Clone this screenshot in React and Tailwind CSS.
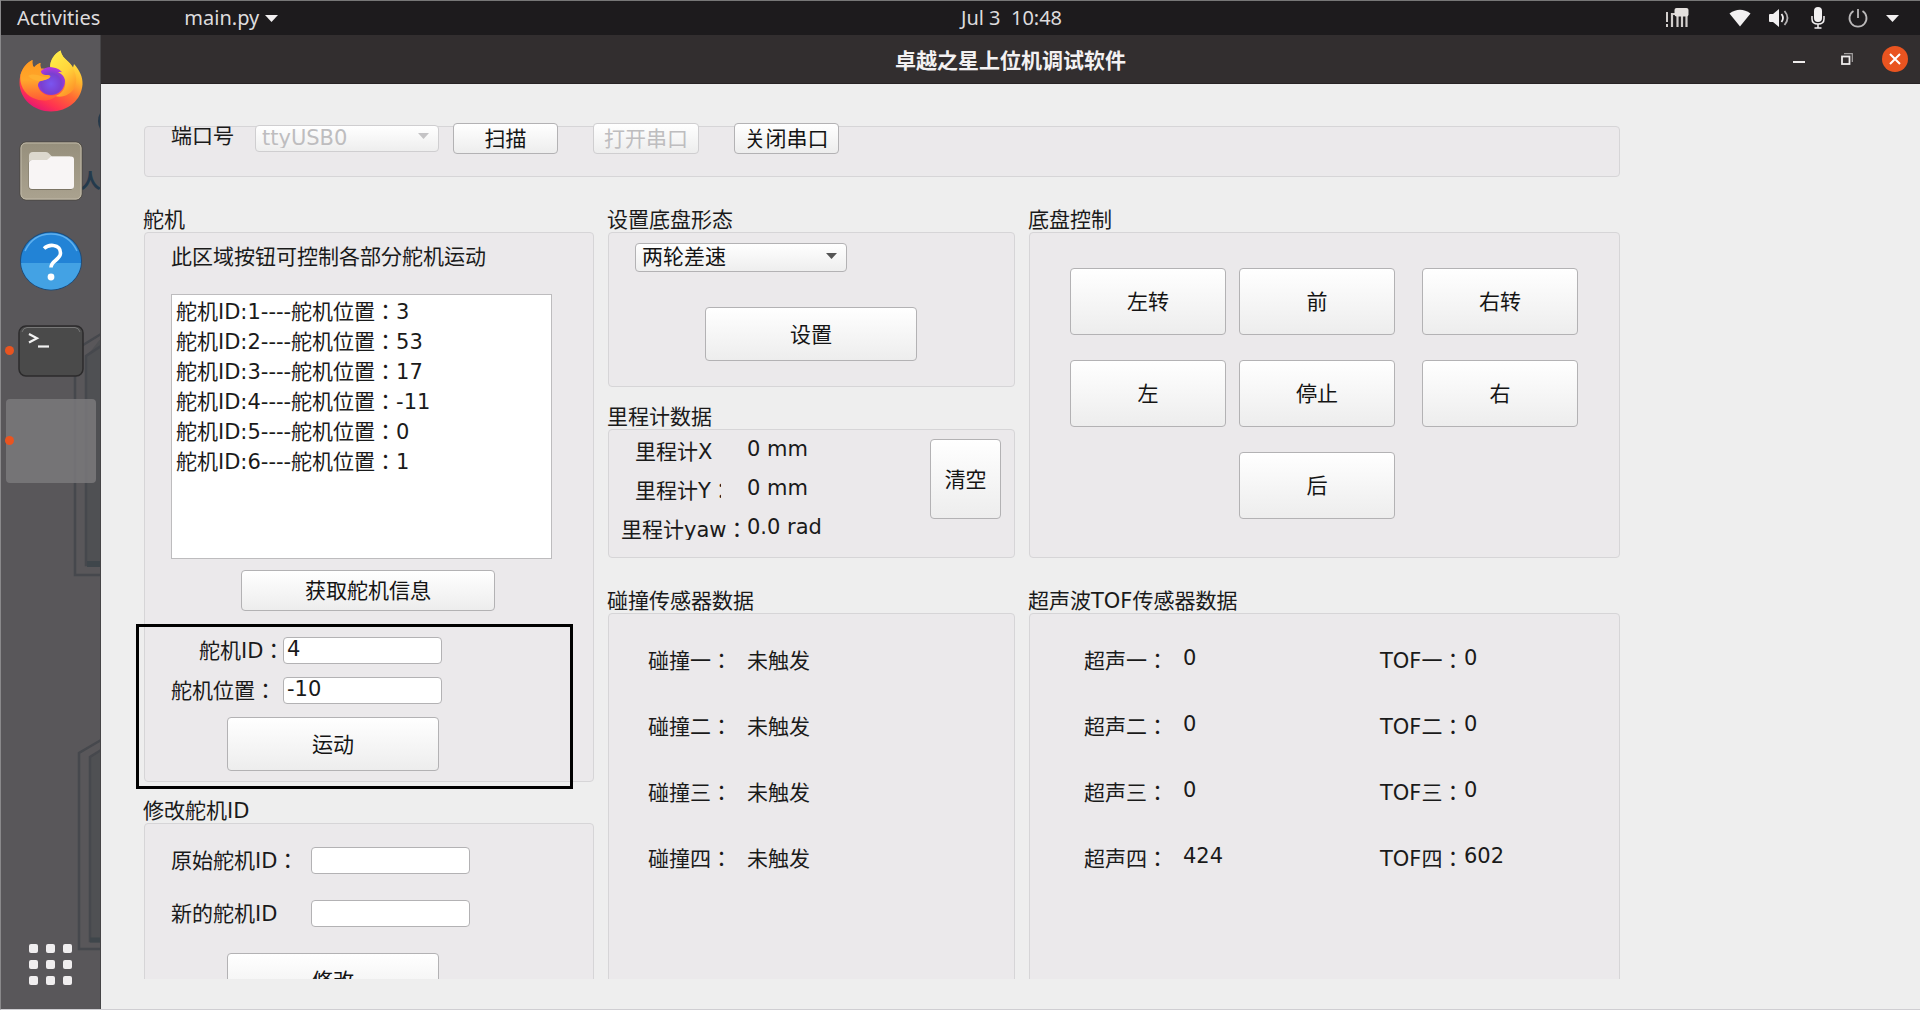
import React from "react";

const body = "font-['DejaVu_Sans','Noto_Sans_CJK_JP',sans-serif]";
const bar = "font-['Noto_Sans','Noto_Sans_CJK_JP',sans-serif]";

function Btn({ children, className = "", disabled = false }) {
  return (
    <button
      type="button"
      disabled={disabled}
      className={`shrink-0 rounded border border-[#b3b2b4] bg-linear-to-b from-white to-[#ededed] pt-px text-center leading-6 text-[#141414] disabled:border-[#cfced0] disabled:text-[#bebdbf] ${className}`}
    >
      {children}
    </button>
  );
}

function Select({ id, label, options, className = "", selectClass = "", disabled = false }) {
  return (
    <div className={`relative shrink-0 ${className}`}>
      <select
        id={id}
        aria-label={label}
        disabled={disabled}
        className={`h-full w-full appearance-none rounded border border-[#b3b2b4] bg-linear-to-b from-white to-[#eeeeee] pl-1.5 leading-6 text-[#141414] disabled:border-[#cfced0] disabled:text-[#bebdbf] disabled:opacity-100 ${selectClass}`}
      >
        {options.map((o) => (
          <option key={o}>{o}</option>
        ))}
      </select>
      <svg
        className={`pointer-events-none absolute right-2.5 top-1/2 -mt-1 ${disabled ? "text-[#c4c3c5]" : "text-[#555]"}`}
        width="11"
        height="6"
        viewBox="0 0 11 6"
      >
        <path d="M0 0h11L5.500 6z" fill="currentColor" />
      </svg>
    </div>
  );
}

function Group({ title, className = "", boxClass = "", children }) {
  return (
    <section className={`flex flex-col ${className}`}>
      <h2 className="-ml-px leading-6 whitespace-nowrap">{title}</h2>
      <div className={`rounded border border-[#d6d5d7] bg-[#ebe9eb] ${boxClass}`}>{children}</div>
    </section>
  );
}

function TextField({ id, value }) {
  return (
    <input
      id={id}
      type="text"
      defaultValue={value}
      className="h-[27px] w-[159px] shrink-0 rounded border border-[#b3b2b4] bg-white pb-1 pl-[3px] leading-6 outline-none"
    />
  );
}

function Firefox() {
  return (
    <svg width="64" height="62" viewBox="0 0 64 62">
      <defs>
        <linearGradient id="ffBody" x1="0.8" y1="0.05" x2="0.25" y2="1">
          <stop offset="0" stopColor="#fff14a" />
          <stop offset="0.3" stopColor="#ffb52e" />
          <stop offset="0.55" stopColor="#ff6a33" />
          <stop offset="0.8" stopColor="#ff3350" />
          <stop offset="1" stopColor="#e0107a" />
        </linearGradient>
        <radialGradient id="ffGlobe" cx="0.5" cy="0.6" r="0.6">
          <stop offset="0" stopColor="#7a55f0" />
          <stop offset="0.6" stopColor="#7a3fd0" />
          <stop offset="1" stopColor="#b637dd" />
        </radialGradient>
        <linearGradient id="ffFlame" x1="0" y1="0" x2="0.5" y2="1">
          <stop offset="0" stopColor="#fff24d" />
          <stop offset="0.6" stopColor="#ffd43a" />
          <stop offset="1" stopColor="#ff9a2a" />
        </linearGradient>
        <linearGradient id="ffHead" x1="0" y1="0" x2="0" y2="1">
          <stop offset="0" stopColor="#ff9a1f" />
          <stop offset="0.5" stopColor="#ffa62b" />
          <stop offset="1" stopColor="#ff5a36" />
        </linearGradient>
      </defs>
      <path
        d="M13.500 10C13 13 13.500 15.500 15 17.500c2-2.500 4.500-4 6.500-4.500-.5 2-.3 4 .7 5.500 3 .2 6 .3 8.800-.5C31 10 36 3.500 41.500 0.500c.8 4.500 3.500 8 8 11.500 2 1.700 3.500 3.500 4.500 5.500l1-3.500c5.500 6 9 13 8.500 20.500C62.500 50 49 61.500 32 61.500S0.500 49 0.500 32.500C0.500 23 5 14 13.500 10z"
        fill="url(#ffBody)"
      />
      <circle cx="32" cy="31" r="14" fill="url(#ffGlobe)" />
      <path
        d="M41.500 0.500C35 4 31 10 31.200 17c5 .3 10 2 12.300 5.500-1.700-.5-3-.6-4.300-.3 5.500 2.500 8.300 7.500 7 13.300-1 5-5 9-10 10.500 7 2.500 16-1.500 19.500-9 3.500-8 1-16-6.200-25C45.500 8.500 42.300 5 41.500 0.500z"
        fill="url(#ffFlame)"
      />
      <path
        d="M13.500 10c-5.800 3-10 8-12 14.500C0 34 5 44 14 48c10 4.500 20 2.500 24-3-8 2.500-17-1-19-8.500-.4-2 .5-4.200 2-5.500 4-1 8-1.800 10.200-4 .8-1-.5-2-2-2-3 .2-6-.3-7-2.500-.4-1.500-.6-2.600 0-4-.9-1.800-1.200-3.600-.7-5.500-2.500.7-4.700 2.200-6.500 4.500-1.500-2-2-4.500-1.500-7.500z"
        fill="url(#ffHead)"
      />
      <path d="M9 26c4-2.500 9-1.500 13 .2 3 1 6 .8 9 1-2 2.300-6 3-10 4-5-.7-9-2-12-5.200z" fill="#ffb030" />
    </svg>
  );
}

function Files() {
  return (
    <svg width="64" height="60" viewBox="0 0 64 60">
      <defs>
        <linearGradient id="flBg" x1="0" y1="0" x2="0" y2="1">
          <stop offset="0" stopColor="#968f7c" />
          <stop offset="1" stopColor="#aaa28f" />
        </linearGradient>
      </defs>
      <rect x="1" y="1" width="62" height="58" rx="6" fill="url(#flBg)" stroke="#4a4740" />
      <rect x="2" y="2" width="60" height="56" rx="5" fill="none" stroke="#c0b9a8" />
      <path d="M10 15q0-4 4-4h13q2 0 3 1.500l3 3h18v12H10z" fill="#dcd8ce" />
      <rect x="9.500" y="19" width="45" height="30" rx="4" fill="#7b7464" />
      <path d="M10 22q0-3 3-3h15l4-3.500h20q3 0 3 3V45q0 3-3 3H13q-3 0-3-3z" fill="#f8f5f5" />
    </svg>
  );
}

function Help() {
  return (
    <svg width="64" height="60" viewBox="0 0 64 60">
      <clipPath id="hpLow">
        <rect x="0" y="32" width="64" height="30" />
      </clipPath>
      <ellipse cx="32" cy="30" rx="31" ry="29.500" fill="#1f4c78" />
      <ellipse cx="32" cy="30" rx="30" ry="28.500" fill="#2283d6" />
      <ellipse cx="32" cy="30" rx="30" ry="28.500" fill="#43a2e4" clipPath="url(#hpLow)" />
      <path d="M6 20C12 7 22 3 32 3s20 4 26 17" fill="none" stroke="#5fb0ee" strokeWidth="1.500" />
      <path
        d="M25 17.500c3-2.800 6.500-3.500 9.500-3 4.500.6 7 3.500 7 7.500 0 7-9.500 7.500-9.500 14.500"
        fill="none"
        stroke="#fff"
        strokeWidth="3.600"
      />
      <circle cx="32" cy="46" r="3.400" fill="#fff" />
    </svg>
  );
}

function Terminal() {
  return (
    <svg width="66" height="52" viewBox="0 0 66 52">
      <rect x="1" y="1" width="64" height="50" rx="7" fill="#4a4a4a" stroke="#2c2b2c" strokeWidth="1.500" />
      <path d="M4 7q1-4 5-4.500h48q4 .5 5 4.500" fill="none" stroke="#777" />
      <path d="M11 9l8 4.300-8 4.200" fill="none" stroke="#f2f2f2" strokeWidth="2.200" />
      <path d="M20 21.500h11" stroke="#f2f2f2" strokeWidth="2.200" />
    </svg>
  );
}

function DockItem({ label, running = false, active = false, children }) {
  return (
    <div className="relative flex h-[90px] items-center justify-center">
      <button
        type="button"
        aria-label={label}
        className={active ? "h-[84px] w-[90px] rounded bg-[#7a797b]/85" : "flex items-center justify-center"}
      >
        {children}
      </button>
      {running && <span className="absolute left-1 top-1/2 -mt-[5px] size-[9px] rounded-full bg-[#e95420]" />}
    </div>
  );
}

function Dock() {
  return (
    <nav className="relative flex w-[100px] shrink-0 flex-col overflow-hidden border-r border-[#454446] bg-[#59575a]">
      <svg className="absolute left-0 top-0" width="101" height="975" viewBox="1 35 101 975" fill="none">
        <ellipse cx="108" cy="121" rx="10" ry="13" fill="#26394a" />
        <path d="M101 338L87 356V565h14z" fill="#4f5053" />
        <path d="M101 334L75 350V575h26M101 346L86 356V565h15" stroke="#46484d" strokeWidth="2.500" />
        <path d="M87 564h14" stroke="#3f464b" strokeWidth="6" />
        <path d="M101 751L90 757V941h11z" fill="#4f5053" />
        <path d="M101 740L79 753V949h22M101 750L90 757V941h11" stroke="#46484d" strokeWidth="2.500" />
        <path d="M90 940h11" stroke="#3f464b" strokeWidth="5" />
      </svg>
      <span className="absolute left-[79px] top-[131px] text-[21px] leading-[26px] font-bold text-[#243a4c] font-['Noto_Sans_CJK_JP',sans-serif]">
        人
      </span>
      <div className="mt-px flex flex-col">
        <DockItem label="Firefox"><Firefox /></DockItem>
        <DockItem label="Files"><Files /></DockItem>
        <DockItem label="Help"><Help /></DockItem>
        <DockItem label="Terminal" running><Terminal /></DockItem>
        <DockItem label="main.py" running active />
      </div>
      <button
        type="button"
        aria-label="Show Applications"
        className="relative mx-auto mt-auto mb-6 grid grid-cols-3 gap-x-2 gap-y-[7px]"
      >
        {Array.from({ length: 9 }, (_, i) => (
          <span key={i} className="size-[9px] rounded-xs bg-[#f0eeef]" />
        ))}
      </button>
    </nav>
  );
}

function TopBar() {
  return (
    <header className={`grid h-[35px] shrink-0 grid-cols-[1fr_auto_1fr] items-center border-t border-[#777] bg-[#1d1b1d] text-[20px] leading-8 text-[#dedcdd] ${bar}`}>
      <div className="flex items-center gap-[84px] pl-4">
        <button type="button">Activities</button>
        <button type="button" className="flex items-center gap-1.5">
          main.py
          <svg width="13" height="7" viewBox="0 0 13 7"><path d="M0 0h13L6.500 7z" fill="#f2f0f1" /></svg>
        </button>
      </div>
      <time className="pl-[102px] whitespace-pre">Jul 3  10:48</time>
      <div className="flex items-center justify-end pr-[21px] text-[#f2f0f1]">
        <svg className="mr-10" width="24" height="22" viewBox="0 0 24 22" fill="none" stroke="#d2cecc">
          <path d="M2 5v10M2 17v3" strokeWidth="2" />
          <path d="M7 20V7h4M12.500 9v11M17 9v11M21.500 9v11" strokeWidth="2.200" />
          <rect x="9.500" y="1" width="14" height="8.500" rx="2" fill="#e4e0de" stroke="none" />
        </svg>
        <svg className="mr-[18px]" width="22" height="18" viewBox="0 0 22 18" fill="currentColor">
          <path d="M0.500 4.500Q11-3 21.500 4.500L11 17.500z" />
        </svg>
        <svg className="mr-[21px]" width="21" height="18" viewBox="0 0 21 18" fill="none" stroke="currentColor">
          <path d="M0 6q0-1 1-1h3l6-5v18l-6-5H1q-1 0-1-1z" fill="currentColor" stroke="none" />
          <path d="M12.500 5q3 4 0 8" strokeWidth="1.800" />
          <path d="M15.500 2q6 7 0 14" strokeWidth="1.800" opacity="0.7" />
        </svg>
        <svg className="mr-[23px]" width="14" height="22" viewBox="0 0 14 22" fill="none" stroke="currentColor">
          <rect x="3" y="0" width="8" height="15" rx="4" fill="currentColor" stroke="none" />
          <path d="M1 9v3q0 5 6 5t6-5V9M7 17v4M3.500 21h7" strokeWidth="1.500" />
        </svg>
        <svg className="mr-[18px]" width="20" height="20" viewBox="0 0 20 20" fill="none" stroke="#bbb9ba" strokeWidth="1.800">
          <path d="M5.500 3A8.500 8.500 0 1 0 14.500 3M10 1v9" />
        </svg>
        <svg width="13" height="7" viewBox="0 0 13 7"><path d="M0 0h13L6.500 7z" fill="currentColor" /></svg>
      </div>
    </header>
  );
}

function TitleBar() {
  return (
    <div className={`grid h-[49px] shrink-0 grid-cols-[1fr_auto_1fr] items-center border-b border-[#272324] bg-[#322e2f] ${bar}`}>
      <span />
      <h1 className="pt-0.5 text-[21px] leading-8 font-bold text-[#f3f1f2]">卓越之星上位机调试软件</h1>
      <div className="flex items-center justify-end pr-3 text-[#eeecec]">
        <button type="button" aria-label="Minimize" className="mr-9">
          <svg width="12" height="12" viewBox="0 0 12 12"><path d="M0 9h12" stroke="currentColor" strokeWidth="2" /></svg>
        </button>
        <button type="button" aria-label="Restore" className="mr-[29px]">
          <svg width="12" height="12" viewBox="0 0 12 12" fill="none" stroke="currentColor">
            <path d="M3 0.700h8.300V9" strokeWidth="1.200" opacity="0.6" />
            <rect x="1" y="3.500" width="7.500" height="7.500" strokeWidth="1.800" />
          </svg>
        </button>
        <button type="button" aria-label="Close" className="flex size-[26px] items-center justify-center rounded-full bg-[#e95420]">
          <svg width="12" height="12" viewBox="0 0 12 12"><path d="M1 1l10 10M11 1L1 11" stroke="#fff" strokeWidth="2" /></svg>
        </button>
      </div>
    </div>
  );
}

const servos = [3, 53, 17, -11, 0, 1];
const bumps = ["一", "二", "三", "四"];
const sonar = ["0", "0", "0", "424"];
const tof = ["0", "0", "0", "602"];

export default function App() {
  return (
    <div className="flex h-screen min-h-0 flex-col overflow-hidden border-b border-l border-b-[#cfced2] border-l-[#8a898b] bg-[#eeeeee]">
      <TopBar />
      <div className="flex min-h-0 flex-1">
        <Dock />
        <div className="flex min-w-0 flex-1 flex-col">
          <TitleBar />
          <main className={`mb-[30px] min-h-0 flex-1 overflow-hidden pt-[42px] pr-[300px] pl-[43px] text-[21px] text-[#1a1a1a] ${body}`}>
            <div className="h-[51px] rounded border border-[#d6d5d7] bg-[#ebe9eb] pl-[26px]">
              <div className="-mt-1 flex items-start">
                <label htmlFor="port" className="w-[84px] shrink-0 leading-[27px]">端口号</label>
                <Select id="port" label="端口号" disabled options={["ttyUSB0"]} className="mr-3.5 h-[27px] w-[184px]" selectClass="pb-[3px]" />
                <Btn className="mr-[35px] h-[31px] w-[105px]">扫描</Btn>
                <Btn disabled className="mr-[35px] h-[31px] w-[106px]">打开串口</Btn>
                <Btn className="h-[31px] w-[105px]">关闭串口</Btn>
              </div>
            </div>

            <div className="mt-[31px] grid grid-cols-[450fr_407fr_591fr] items-start gap-x-3.5">
              <div className="relative flex min-w-0 flex-col gap-[17px]">
                <Group title="舵机" boxClass="h-[550px] px-[26px] pt-3">
                  <p className="leading-6">此区域按钮可控制各部分舵机运动</p>
                  <ul className="mt-[25px] h-[265px] w-[381px] border border-[#bdbcbe] bg-white pt-0.5 pl-1">
                    {servos.map((v, i) => (
                      <li key={i} className="leading-[30px]">{`舵机ID:${i + 1}----舵机位置：${v}`}</li>
                    ))}
                  </ul>
                  <Btn className="mt-[11px] ml-[70px] h-[41px] w-[254px]">获取舵机信息</Btn>
                  <div className="mt-[25px] flex items-center">
                    <label htmlFor="servo-id" className="w-[112px] shrink-0 pt-0.5 pl-7 leading-[27px] whitespace-nowrap">舵机ID：</label>
                    <TextField id="servo-id" value="4" />
                  </div>
                  <div className="mt-[11px] flex items-center">
                    <label htmlFor="servo-pos" className="w-[112px] shrink-0 pt-0.5 leading-[27px]">舵机位置：</label>
                    <TextField id="servo-pos" value="-10" />
                  </div>
                  <Btn className="mt-3 ml-14 h-[54px] w-[212px]">运动</Btn>
                </Group>
                <div className="pointer-events-none absolute top-[416px] -left-2 h-[165px] w-[437px] border-3 border-black" />
                <Group title="修改舵机ID" boxClass="h-[200px] px-[26px] pt-[22px]">
                  <div className="flex items-center">
                    <label htmlFor="old-id" className="w-[140px] shrink-0 pt-0.5 leading-[27px] whitespace-nowrap">原始舵机ID：</label>
                    <TextField id="old-id" value="" />
                  </div>
                  <div className="mt-6 flex items-center">
                    <label htmlFor="new-id" className="w-[140px] shrink-0 pt-0.5 leading-[27px]">新的舵机ID</label>
                    <TextField id="new-id" value="" />
                  </div>
                  <Btn className="mt-[25px] ml-14 h-[54px] w-[212px]">修改</Btn>
                </Group>
              </div>

              <div className="flex min-w-0 flex-col">
                <Group title="设置底盘形态" boxClass="h-[155px] pt-[9px] pl-[26px]">
                  <Select id="mode" label="设置底盘形态" options={["两轮差速"]} className="h-[29px] w-[212px]" />
                  <Btn className="mt-9 ml-[70px] h-[54px] w-[212px]">设置</Btn>
                </Group>
                <Group title="里程计数据" className="mt-[18px]" boxClass="flex h-[129px] items-start justify-between pt-[7px] pr-[13px]">
                  <div className="grid grid-cols-[138px_auto] gap-y-[9px] whitespace-nowrap">
                    <span className="ml-[26px] leading-[30px]">里程计X</span>
                    <span className="leading-6">0 mm</span>
                    <span className="ml-[26px] w-[86px] overflow-hidden leading-[30px]">里程计Y：</span>
                    <span className="leading-6">0 mm</span>
                    <span className="ml-3 h-[25px] overflow-hidden leading-[30px]">里程计yaw：</span>
                    <span className="leading-6">0.0 rad</span>
                  </div>
                  <Btn className="mt-0.5 h-20 w-[71px]">清空</Btn>
                </Group>
                <Group title="碰撞传感器数据" className="mt-[31px]" boxClass="h-[400px] pt-8">
                  <div className="grid grid-cols-[99px_auto] gap-y-9 pl-[39px]">
                    {bumps.map((n) => (
                      <React.Fragment key={n}>
                        <span className="leading-[30px]">{`碰撞${n}：`}</span>
                        <span className="leading-[30px]">未触发</span>
                      </React.Fragment>
                    ))}
                  </div>
                </Group>
              </div>

              <div className="flex min-w-0 flex-col">
                <Group title="底盘控制" boxClass="h-[326px] pt-[35px] pr-[41px] pl-10">
                  <div className="flex justify-between">
                    <div className="grid grid-cols-[156px_156px] gap-x-[13px] gap-y-[25px]">
                      <Btn className="h-[67px]">左转</Btn>
                      <Btn className="h-[67px]">前</Btn>
                      <Btn className="h-[67px]">左</Btn>
                      <Btn className="h-[67px]">停止</Btn>
                      <Btn className="col-start-2 h-[67px]">后</Btn>
                    </div>
                    <div className="flex w-[156px] flex-col gap-[25px]">
                      <Btn className="h-[67px]">右转</Btn>
                      <Btn className="h-[67px]">右</Btn>
                    </div>
                  </div>
                </Group>
                <Group title="超声波TOF传感器数据" className="mt-[31px]" boxClass="h-[400px] pt-8">
                  <div className="grid grid-cols-[99px_197px_84px_auto] gap-y-9 pl-[54px] whitespace-nowrap">
                    {bumps.map((n, i) => (
                      <React.Fragment key={n}>
                        <span className="leading-[30px]">{`超声${n}：`}</span>
                        <span className="leading-6">{sonar[i]}</span>
                        <span className="leading-[30px]">{`TOF${n}：`}</span>
                        <span className="leading-6">{tof[i]}</span>
                      </React.Fragment>
                    ))}
                  </div>
                </Group>
              </div>
            </div>
          </main>
        </div>
      </div>
    </div>
  );
}
